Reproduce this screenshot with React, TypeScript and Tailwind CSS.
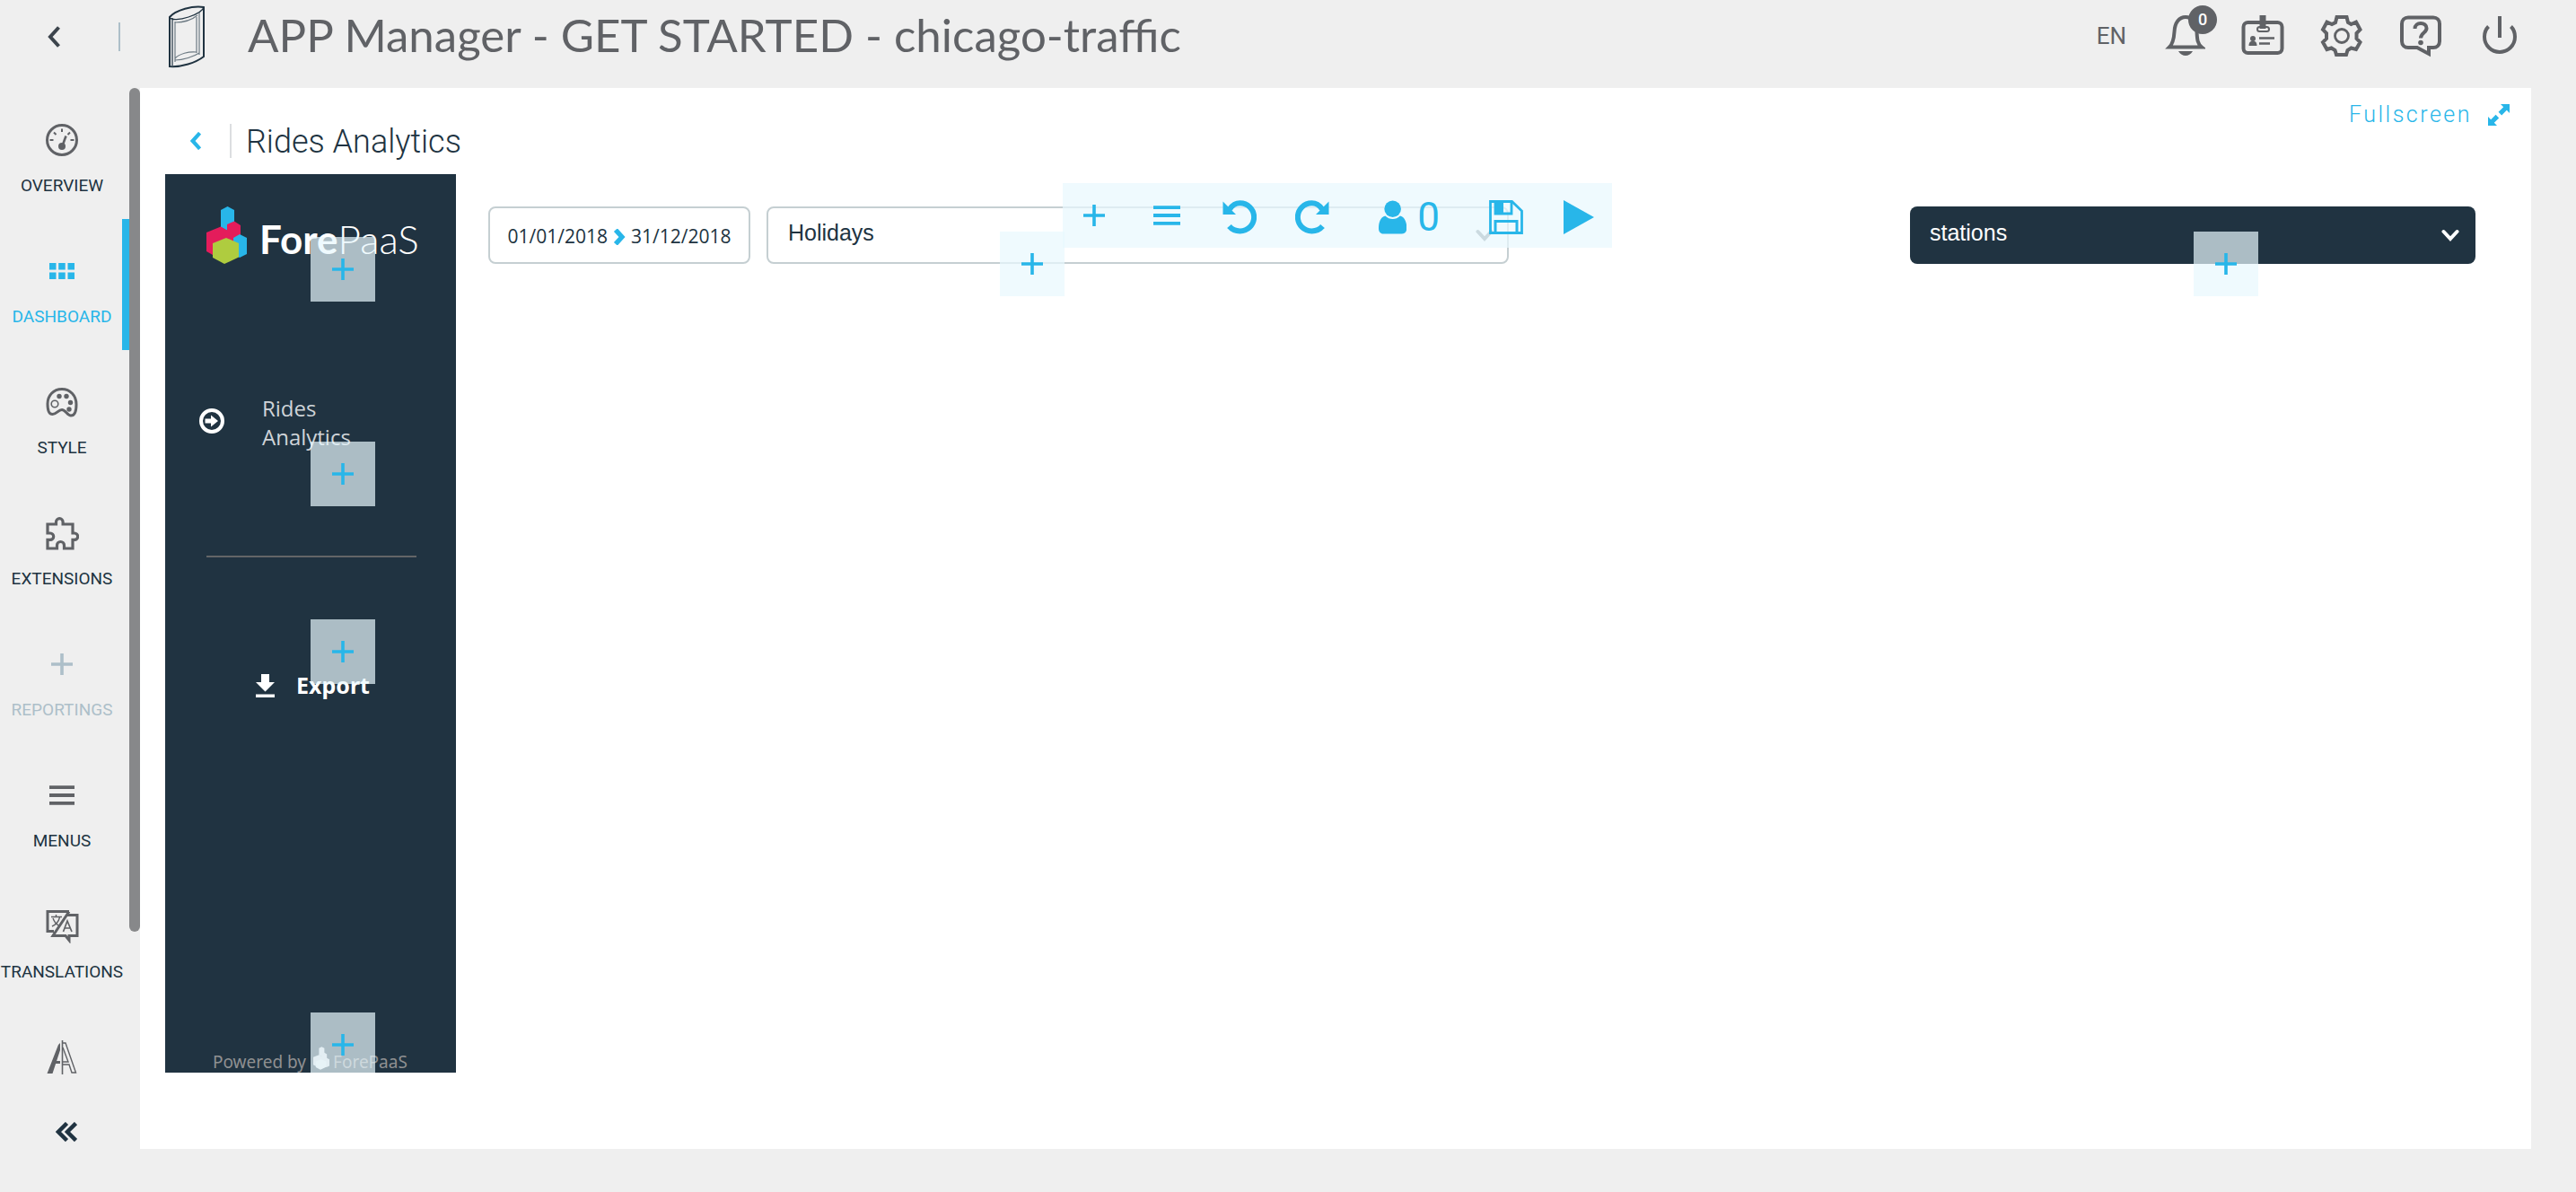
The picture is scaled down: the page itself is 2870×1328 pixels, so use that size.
import React from "react";

type IconProps = { className?: string };

function Plus({ className = "h-6 w-6" }: IconProps) {
  return (
    <svg className={className} viewBox="0 0 24 24" stroke="currentColor" strokeWidth="3.6" fill="none" aria-hidden="true">
      <path d="M12 0v24M0 12h24" />
    </svg>
  );
}

function Chevron({ className, width = 4 }: IconProps & { width?: number }) {
  return (
    <svg className={className} viewBox="0 0 14 24" fill="none" stroke="currentColor" strokeWidth={width} aria-hidden="true">
      <path d="M12.500 1.500L3 12l9.500 10.500" />
    </svg>
  );
}

function ChevronDown({ className }: IconProps) {
  return (
    <svg className={className} viewBox="0 0 20 14" fill="none" stroke="currentColor" strokeWidth="4" strokeLinecap="round" aria-hidden="true">
      <path d="M2.500 3L10 11l7.500-8" />
    </svg>
  );
}

function Bars({ className = "h-6 w-7" }: IconProps) {
  return (
    <svg className={className} viewBox="0 0 28 24" preserveAspectRatio="none" stroke="currentColor" strokeWidth="3.800" fill="none" aria-hidden="true">
      <path d="M0 3.200h28M0 12h28M0 20.800h28" />
    </svg>
  );
}

function PortalLogo() {
  return (
    <svg className="h-[70px] w-10" viewBox="0 0 40 70" fill="none" stroke="#203341" strokeWidth="1.500" aria-hidden="true">
      <path d="M1 13C8 5 27 0 39 2v55C30 64 14 69 1 68z" strokeWidth="2" />
      <path d="M1 13c1 4 12 3 21 0 9-3 16-7 17-11M4 14v53" strokeWidth="1.200" />
      <path d="M7 18v45M7 19c10 0 19-3 25-8M31 13v40M34 8v47M7 61c9 0 21-4 27-8M7 59c5-5 15-8 24-7" stroke="#6d7a83" strokeWidth="1.200" />
    </svg>
  );
}

function Bell() {
  return (
    <svg className="size-12" viewBox="0 0 48 48" fill="none" stroke="currentColor" strokeWidth="4" aria-hidden="true">
      <path d="M8 36.500h36c-5-4-5-9-5.500-17C38 9 33 3 26 3S14 9 13.500 19.500C13 27.500 12 32.500 8 36.500z" />
      <path d="M18 41h16c-2 3.500-5 5-8 5s-6-1.500-8-5z" fill="currentColor" stroke="none" />
    </svg>
  );
}

function IdCard() {
  return (
    <svg className="size-12" viewBox="0 0 48 48" fill="none" stroke="currentColor" aria-hidden="true">
      <rect x="2.500" y="9" width="43" height="34" rx="5" strokeWidth="4" />
      <path d="M24 1v15" strokeWidth="7" />
      <rect x="18" y="14" width="13" height="5" rx="2.500" strokeWidth="2" />
      <circle cx="13" cy="27" r="3" fill="currentColor" stroke="none" />
      <path d="M8.500 35c0-4 2-5.500 4.500-5.500s4.500 1.500 4.500 5.500z" fill="currentColor" stroke="none" />
      <path d="M20 26.500h17M20 32.500h12" strokeWidth="2.500" />
    </svg>
  );
}

function Gear() {
  return (
    <svg className="size-12" viewBox="0 0 48 48" fill="none" stroke="currentColor" aria-hidden="true">
      <path
        d="M18.500 3h11l1.500 6 3.500 2 5.500-2.500 4.500 8.500-4 4v6l4 4-4.500 8-5.500-1.500-4 2.500-1.500 5h-11l-1.500-5-4-2.500L7.500 39 3 31l4-4v-6l-4-4 4.500-8.500L13 11l4-2z"
        strokeWidth="4"
      />
      <circle cx="24" cy="24" r="7.500" strokeWidth="2.800" />
    </svg>
  );
}

function Help() {
  return (
    <svg className="size-12" viewBox="0 0 48 48" fill="none" stroke="currentColor" aria-hidden="true">
      <path d="M10 3.500h28c4 0 7 3 7 7V30c0 4-3 7-7 7h-5v7l-13-7H10c-4 0-7-3-7-7V10.500c0-4 3-7 7-7z" strokeWidth="4" />
      <path d="M17.500 16c0-4 3-6 6.500-6s6.500 2 6.500 5.500c0 5-6.500 5-6.500 11" strokeWidth="4" />
      <circle cx="24" cy="31.500" r="2.800" fill="currentColor" stroke="none" />
    </svg>
  );
}

function Power() {
  return (
    <svg className="size-12" viewBox="0 0 48 48" fill="none" stroke="currentColor" strokeWidth="4" aria-hidden="true">
      <path d="M24 2v24M11.500 13.500C8 17 7 21 7 25a17 17 0 0 0 34 0c0-4-1-8-4.500-11.500" />
    </svg>
  );
}

function Gauge() {
  return (
    <svg className="size-9" viewBox="0 0 36 36" fill="none" stroke="currentColor" aria-hidden="true">
      <circle cx="18" cy="18" r="16.500" strokeWidth="3" />
      <path d="M18 5.500v3.500M9 9.500l2.500 2.500M27 9.500L24.500 12M4.500 18h4M27.500 18h4" strokeWidth="2" />
      <path d="M22.500 13.500l-4 11" strokeWidth="2.600" />
      <circle cx="18" cy="25" r="4" fill="currentColor" stroke="none" />
    </svg>
  );
}

function GridDots() {
  return (
    <svg className="h-[18px] w-7" viewBox="0 0 28 18" fill="currentColor" aria-hidden="true">
      <path d="M0 0h7.500v7.500H0zM10.200 0h7.500v7.500h-7.500zM20.500 0H28v7.500h-7.500zM0 10.500h7.500V18H0zM10.200 10.500h7.500V18h-7.500zM20.500 10.500H28V18h-7.500z" />
    </svg>
  );
}

function Palette() {
  return (
    <svg className="size-9" viewBox="0 0 36 36" fill="none" stroke="currentColor" aria-hidden="true">
      <path
        d="M18 3.500C8.500 3.500 2 10.500 2 20c0 6 1.500 11.500 5.500 11.500 4.500 0 6.500-5 10.500-5s6 6.500 10 6.500c4.500 0 6-6.500 6-12.500C34 10.500 27 3.500 18 3.500z"
        strokeWidth="3"
      />
      <circle cx="10" cy="20" r="3.800" strokeWidth="1.600" />
      <g fill="currentColor" stroke="none">
        <circle cx="15" cy="11.500" r="2.700" />
        <circle cx="23" cy="11.500" r="2.700" />
        <circle cx="27.500" cy="18.500" r="2.700" />
        <circle cx="26" cy="26" r="2.700" />
      </g>
    </svg>
  );
}

function Puzzle() {
  return (
    <svg className="size-[38px]" viewBox="0 0 38 38" fill="none" stroke="currentColor" strokeWidth="3.200" aria-hidden="true">
      <path d="M3 9h9.500V6.500a3.800 3.800 0 0 1 7.600 0V9H31v10h2a3.700 3.700 0 0 1 0 7.400h-2V36h-9.500V32.500a4 4 0 0 0-8 0V36H3V26.400h3a3.700 3.700 0 0 0 0-7.400H3z" />
    </svg>
  );
}

function Translate() {
  return (
    <svg className="size-[38px]" viewBox="0 0 38 38" fill="none" stroke="currentColor" aria-hidden="true">
      <path d="M27 2.500H3v22h7M27 2.500L9 29.500h14l4 5v-5h9v-23H25" strokeWidth="3" />
      <path d="M7 8.500h12M12.500 6v2.500M16.500 9c-1 4-4 8-8.500 10M9 10c1.500 4 4 7 6.500 8" strokeWidth="1.400" />
      <path d="M20.500 25l4.500-12 5 12M22 21h6.500" strokeWidth="1.700" />
    </svg>
  );
}

function Typeface() {
  return (
    <svg className="h-[38px] w-[34px]" viewBox="0 0 34 38" fill="none" stroke="currentColor" aria-hidden="true">
      <path d="M17.500 0v38" strokeWidth="1.600" />
      <path d="M15 3v8L6.500 37H.5L13 5zM9 23h6v3H8z" fill="currentColor" stroke="none" />
      <path d="M18 3h3l11.500 33H28l-3-9h-7M18 8l6 16h-6" strokeWidth="1.400" />
    </svg>
  );
}

function DoubleChevron() {
  return (
    <svg className="h-[22px] w-6" viewBox="0 0 24 22" fill="none" stroke="currentColor" strokeWidth="4.500" aria-hidden="true">
      <path d="M12.500 1.500L3 11l9.500 9.500M22.500 1.500L13 11l9.500 9.500" />
    </svg>
  );
}

function Expand() {
  return (
    <svg className="size-6" viewBox="0 0 24 24" fill="currentColor" aria-hidden="true">
      <path d="M14 0h10v10l-3.200-3.200-5.600 5.600-3.600-3.600 5.600-5.600zM10 24H0V14l3.200 3.200 5.400-5.400 3.600 3.600-5.400 5.400z" />
    </svg>
  );
}

function Undo({ className }: IconProps) {
  return (
    <svg className={className} viewBox="0 0 38 38" aria-hidden="true">
      <path d="M8 10C11 5.500 15 3.200 19.500 3.200a15.500 15.500 0 1 1 0 31.300c-5 0-9-1.800-12-5.500" fill="none" stroke="currentColor" strokeWidth="6" />
      <path d="M.5 1.500V16H15z" fill="currentColor" />
    </svg>
  );
}

function Person() {
  return (
    <svg className="h-[38px] w-8" viewBox="0 0 32 38" fill="currentColor" aria-hidden="true">
      <ellipse cx="16" cy="9.500" rx="9.500" ry="9.500" />
      <path d="M7.500 17.500c2.500 2.500 5.500 3.500 8.500 3.500s6-1 8.500-3.500c5.500 1.500 7.500 7.500 7.500 14 0 4-2 6.500-6 6.500H6c-4 0-6-2.500-6-6.500 0-6.500 2-12.500 7.500-14z" />
    </svg>
  );
}

function Floppy() {
  return (
    <svg className="size-[38px]" viewBox="0 0 38 38" fill="none" stroke="currentColor" strokeWidth="2.800" aria-hidden="true">
      <path d="M1.500 1.500h24L36.500 12v24.500h-35z" />
      <path d="M7 36V23.500h24V36" strokeWidth="3" />
      <path d="M7 1v14h18V1" />
      <path d="M8 2h8v12H8z" fill="currentColor" stroke="none" />
    </svg>
  );
}

function Play() {
  return (
    <svg className="h-[38px] w-[34px]" viewBox="0 0 34 38" fill="currentColor" aria-hidden="true">
      <path d="M0 0l34 19L0 38z" />
    </svg>
  );
}

function CircleArrow() {
  return (
    <svg className="mb-1 size-7 shrink-0" viewBox="0 0 28 28" aria-hidden="true">
      <circle cx="14" cy="14" r="12" fill="none" stroke="currentColor" strokeWidth="4" />
      <path d="M6.500 11.500H13V7.500l8 6.500-8 6.500v-4H6.500z" fill="currentColor" />
    </svg>
  );
}

function Download() {
  return (
    <svg className="h-[26px] w-[21px]" viewBox="0 0 21 26" fill="currentColor" aria-hidden="true">
      <path d="M6 0h9v9h6L10.500 19.500 0 9h6zM0 22.500h21V26H0z" />
    </svg>
  );
}

function Cubes({ className, mono = false }: IconProps & { mono?: boolean }) {
  const c = mono ? ["#d5d8da", "#d5d8da", "#d5d8da", "#e4e6e7"] : ["#28b6e9", "#e41c5b", "#28b6e9", "#afcc3f"];
  return (
    <svg className={className} viewBox="0 0 45 64" aria-hidden="true">
      <path d="M16 4l7.500-4L31 4v16l-8 7-7-4z" fill={c[0]} />
      <path d="M0 29l16-6.500 7 4V20l8-3.500 7 4.500v20L7 54l-7-4z" fill={c[1]} />
      <path d="M30 35l7-4 8 4v18l-8 4-7-4z" fill={c[2]} />
      <path d="M7 41l15-6 14 6v15.500L20 64 7 57z" fill={c[3]} />
    </svg>
  );
}

function AddZone({ className, label }: { className: string; label: string }) {
  return (
    <button
      type="button"
      aria-label={label}
      className={`absolute flex size-[72px] items-center justify-center bg-[#e8f8fd]/70 text-[#28b6e9] ${className}`}
    >
      <Plus />
    </button>
  );
}

const menu = [
  { label: "OVERVIEW", icon: <Gauge />, tone: "text-[#203341]", iconTone: "text-[#606266]", active: false },
  { label: "DASHBOARD", icon: <GridDots />, tone: "text-[#28b6e9]", iconTone: "text-[#28b6e9]", active: true },
  { label: "STYLE", icon: <Palette />, tone: "text-[#203341]", iconTone: "text-[#606266]", active: false },
  { label: "EXTENSIONS", icon: <Puzzle />, tone: "text-[#203341]", iconTone: "text-[#606266]", active: false },
  { label: "REPORTINGS", icon: <Plus />, tone: "text-[#adbfc9]", iconTone: "text-[#adbfc9]", active: false },
  { label: "MENUS", icon: <Bars />, tone: "text-[#203341]", iconTone: "text-[#606266]", active: false },
  { label: "TRANSLATIONS", icon: <Translate />, tone: "text-[#203341]", iconTone: "text-[#606266]", active: false },
  { label: "", icon: <Typeface />, tone: "text-[#203341]", iconTone: "text-[#606266]", active: false },
];

function TopBar() {
  return (
    <header className="flex h-[98px] shrink-0 items-start justify-between pr-[61px] pl-[53px] text-[#606266]">
      <div className="flex h-[82px] items-center">
        <button type="button" aria-label="Back" className="mr-[65px] text-[#3c444c]">
          <Chevron className="h-6 w-[14px]" width={4} />
        </button>
        <span className="mr-[54px] h-8 w-[2px] bg-[#adbfc9]" />
        <PortalLogo />
        <h1 className="ml-12 pb-1 font-[Lato] text-[51px] leading-[76px] whitespace-nowrap">
          APP Manager - GET STARTED - chicago-traffic
        </h1>
      </div>
      <div className="flex h-20 items-center gap-10">
        <button type="button" className="text-[26px]">EN</button>
        <button type="button" aria-label="Notifications" className="relative">
          <Bell />
          <span className="absolute -top-[10px] left-[29px] flex size-8 items-center justify-center rounded-full bg-[#606266] text-lg font-medium text-white">
            0
          </span>
        </button>
        <button type="button" aria-label="Account"><IdCard /></button>
        <button type="button" aria-label="Settings"><Gear /></button>
        <button type="button" aria-label="Help"><Help /></button>
        <button type="button" aria-label="Log out"><Power /></button>
      </div>
    </header>
  );
}

function SideMenu() {
  return (
    <div className="flex w-[156px] shrink-0 flex-col">
      <div className="flex min-h-0 flex-1">
        <nav className="w-36 overflow-hidden">
          {menu.map((item) => (
            <a
              key={item.label}
              href="#"
              aria-label={item.label || "Fonts"}
              className={`relative flex h-[146px] flex-col items-center pt-9 pr-[6px] ${item.tone}`}
            >
              <span className={`flex h-11 items-center ${item.iconTone}`}>{item.icon}</span>
              <span className="mt-[17px] text-[19px] leading-6">{item.label}</span>
              {item.active && <span className="absolute inset-y-0 right-0 w-2 bg-[#28b6e9]" />}
            </a>
          ))}
        </nav>
        <div className="w-3">
          <div className="h-[940px] rounded-full bg-[#87888a]" />
        </div>
      </div>
      <button type="button" aria-label="Collapse menu" className="flex h-[70px] items-center justify-center pt-8 pr-2 text-[#203341]">
        <DoubleChevron />
      </button>
    </div>
  );
}

function AppPanel() {
  return (
    <aside className="flex w-[324px] shrink-0 flex-col bg-[#203341] text-white">
      <div className="relative h-[142px] pt-9 pl-[46px]">
        <a href="#" className="flex h-16 items-center">
          <Cubes className="h-16 w-[45px]" />
          <span className="ml-[14px] pt-2 font-[Lato] text-[44px] leading-none">
            <span className="font-bold">Fore</span>
            <span className="font-light">PaaS</span>
          </span>
        </a>
        <AddZone className="bottom-0 left-1/2" label="Add to header" />
      </div>
      <div className="relative h-[228px] pt-[103px] pl-[38px]">
        <a href="#" className="flex items-center gap-[42px]">
          <CircleArrow />
          <span className="w-28 font-['Open_Sans'] text-2xl leading-8 text-[#cfd4d8]">Rides Analytics</span>
        </a>
        <AddZone className="bottom-0 left-1/2" label="Add to navigation" />
      </div>
      <hr className="mr-11 ml-[46px] mt-[55px] border-t-2 border-[#636567]" />
      <div className="relative mt-[69px] h-[92px] pt-[59px] pl-[101px]">
        <button type="button" className="flex h-[30px] items-center gap-6 font-['Noto_Sans'] text-[25px] font-bold">
          <Download />
          Export
        </button>
        <AddZone className="top-0 left-1/2" label="Add to export" />
      </div>
      <div className="relative mt-auto h-[67px] overflow-hidden pt-[38px] pl-[53px]">
        <p className="flex items-center font-['Noto_Sans'] text-[19px] leading-8 text-[#8f9091]">
          Powered by
          <Cubes className="mr-1 mb-2 ml-2 h-[26px] w-[18px]" mono />
          ForePaaS
        </p>
        <AddZone className="top-0 left-1/2" label="Add to footer" />
      </div>
    </aside>
  );
}

function Filters() {
  return (
    <section className="relative flex flex-1 items-start pt-9 pr-[62px] pl-9 text-[#203341]">
      <button
        type="button"
        className="flex h-16 w-[292px] items-center justify-center gap-[6px] rounded-lg border-2 border-[#c5cfd2] pt-1 font-['Open_Sans'] text-[21px]"
      >
        01/01/2018
        <Chevron className="h-[18px] w-[14px] rotate-180 text-[#28b6e9]" width={7} />
        31/12/2018
      </button>
      <div className="relative ml-[18px] w-[827px]">
        <select
          aria-label="Holidays"
          className="h-16 w-full appearance-none rounded-lg border-2 border-[#c5cfd2] bg-white pb-1 pl-[22px] font-['Liberation_Sans'] text-[25px]"
        >
          <option>Holidays</option>
        </select>
        <ChevronDown className="pointer-events-none absolute top-[25px] right-[17px] h-[14px] w-5 text-[#87939b]" />
        <AddZone className="top-7 left-[260px]" label="Add filter" />
      </div>
      <div className="relative ml-auto w-[630px]">
        <select
          aria-label="Stations"
          className="h-16 w-full appearance-none rounded-lg bg-[#203341] pb-1 pl-[22px] font-['Liberation_Sans'] text-[25px] text-white"
        >
          <option>stations</option>
        </select>
        <ChevronDown className="pointer-events-none absolute top-[25px] right-[18px] h-[14px] w-5 text-white" />
        <AddZone className="top-7 left-[316px]" label="Add scale" />
      </div>
      <div
        role="toolbar"
        aria-label="Editing"
        className="absolute top-[10px] left-[676px] flex h-[72px] w-[612px] items-center bg-[#e8f8fd]/70 pt-1 pl-[23px] text-[#28b6e9]"
      >
        <button type="button" aria-label="Add" className="mb-1"><Plus /></button>
        <button type="button" aria-label="List" className="mb-1 ml-[54px]"><Bars className="h-6 w-[30px]" /></button>
        <button type="button" aria-label="Undo" className="ml-[47px]"><Undo className="size-[38px]" /></button>
        <button type="button" aria-label="Redo" className="ml-[43px]"><Undo className="size-[38px] -scale-x-100" /></button>
        <button type="button" aria-label="Users" className="ml-[55px] flex w-[68px] items-center gap-3 text-[44px] leading-none">
          <Person />
          0
        </button>
        <button type="button" aria-label="Save" className="ml-[55px]"><Floppy /></button>
        <button type="button" aria-label="Run" className="ml-[45px]"><Play /></button>
      </div>
    </section>
  );
}

export default function App() {
  return (
    <div className="flex h-screen flex-col overflow-hidden bg-[#efefef] pb-12 font-[Roboto]">
      <TopBar />
      <div className="flex min-h-0 flex-1 pr-[50px]">
        <SideMenu />
        <main className="flex min-w-0 flex-1 flex-col bg-white pb-[85px] pl-7">
          <div className="flex h-24 shrink-0 items-start justify-between pr-6 pl-7">
            <div className="flex items-center pt-10">
              <button type="button" aria-label="Back to dashboards" className="mr-8 text-[#28b6e9]">
                <Chevron className="h-5 w-3" width={5} />
              </button>
              <span className="mr-4 h-[38px] w-[2px] bg-[#dcdee0]" />
              <h2 className="pt-[2px] text-4xl leading-9 font-light text-[#203341]">Rides Analytics</h2>
            </div>
            <button type="button" className="mt-4 flex items-center gap-[18px] text-[25px] leading-7 font-light tracking-widest text-[#28b6e9]">
              Fullscreen
              <Expand />
            </button>
          </div>
          <div className="flex min-h-0 flex-1">
            <AppPanel />
            <Filters />
          </div>
        </main>
      </div>
    </div>
  );
}
